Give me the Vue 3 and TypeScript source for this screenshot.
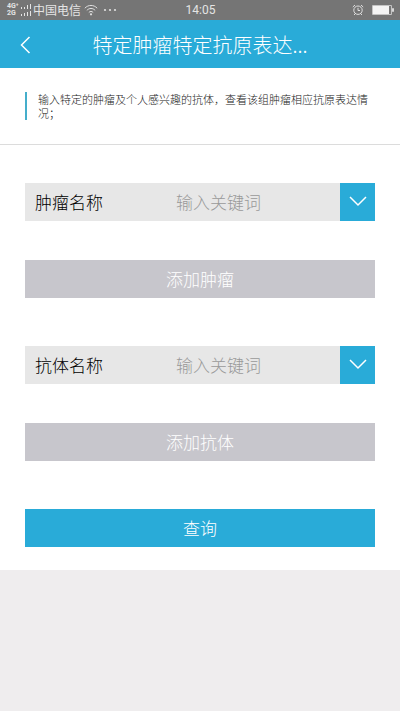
<script setup lang="ts">
import { reactive } from 'vue'

interface Field {
  id: string
  label: string
  add: string
  value: string
}

const fields = reactive<Field[]>([
  { id: 'tumor', label: '肿瘤名称', add: '添加肿瘤', value: '' },
  { id: 'antibody', label: '抗体名称', add: '添加抗体', value: '' },
])
</script>

<template>
  <div class="page">
    <div class="status">
      <div class="status-left">
        <span class="network"><span>4G⁺</span><span>2G</span></span>
        <svg class="signal" width="12" height="14" viewBox="0 0 12 14" aria-hidden="true">
          <path d="M1.500 4V6M4.500 4V6M7.500 2V6M10.500 1V6M1.500 11V13M4.500 10V13M7.500 9V13M10.500 8V13" />
        </svg>
        <span class="carrier">中国电信</span>
        <svg class="wifi" width="14" height="12" viewBox="0 0 14 12" aria-hidden="true">
          <path d="M.8 4.200C4.300.5 9.700.5 13.200 4.200M2.800 6.400C5.200 3.800 8.800 3.800 11.200 6.400M4.800 8.500C6.100 7.100 7.900 7.100 9.200 8.500" />
          <circle cx="7" cy="10.300" r="1.100" />
        </svg>
        <svg class="more" width="14" height="4" viewBox="0 0 14 4" aria-hidden="true">
          <circle cx="2" cy="2" r="1.100" /><circle cx="7" cy="2" r="1.100" /><circle cx="12" cy="2" r="1.100" />
        </svg>
      </div>
      <span class="time">14:05</span>
      <div class="status-right">
        <svg class="alarm" width="12" height="12" viewBox="0 0 12 12" aria-hidden="true">
          <circle cx="6" cy="6.200" r="4.200" />
          <path d="M6 3.800V6.500H8M.8 3L3 1M11.200 3L9 1M3.200 9.500L2.200 11M8.800 9.500L9.800 11" />
        </svg>
        <svg width="22" height="10" viewBox="0 0 22 10" aria-hidden="true">
          <rect x="0" y="0" width="20" height="10" rx="1" fill="#c4c4c4" />
          <rect x="1" y="1" width="16" height="8" fill="#f4f4f4" />
          <rect x="17" y="1" width="2" height="8" fill="#777" />
          <rect x="20" y="3" width="2" height="4" rx="1" fill="#d8d8d8" />
        </svg>
      </div>
    </div>

    <header class="header">
      <button class="back" type="button" aria-label="返回">
        <svg width="12" height="18" viewBox="0 0 12 18" aria-hidden="true">
          <path d="M10.500 1L2.500 9L10.500 17" />
        </svg>
      </button>
      <h1>特定肿瘤特定抗原表达...</h1>
    </header>

    <main class="content">
      <section class="intro">
        <p>输入特定的肿瘤及个人感兴趣的抗体，查看该组肿瘤相应抗原表达情况；</p>
      </section>

      <form class="form" @submit.prevent>
        <div v-for="field in fields" :key="field.id" class="group">
          <div class="field">
            <label :for="field.id">{{ field.label }}</label>
            <input :id="field.id" v-model="field.value" type="text" placeholder="输入关键词" />
            <button class="toggle" type="button" :aria-label="field.label">
              <svg width="18" height="12" viewBox="0 0 18 12" aria-hidden="true">
                <path d="M1 1L9 9L17 1" />
              </svg>
            </button>
          </div>
          <button class="action add" type="button">{{ field.add }}</button>
        </div>
        <button class="action query" type="submit">查询</button>
      </form>
    </main>
  </div>
</template>

<style>
body {
  margin: 0;
  background: #efedee;
}
</style>

<style scoped>
.page {
  font-family: "Noto Sans CJK SC", sans-serif;
  font-weight: 300;
}

button,
input {
  margin: 0;
  padding: 0;
  border: 0;
  border-radius: 0;
  font: inherit;
}

svg {
  display: block;
  fill: none;
}

.status {
  display: grid;
  grid-template-columns: 1fr auto 1fr;
  align-items: center;
  height: 20px;
  padding: 0 6px 0 7px;
  background: #757575;
  color: #e4e4e4;
  font-size: 12px;
  line-height: 20px;
}

.status-left,
.status-right {
  display: flex;
  align-items: center;
}

.status-right {
  justify-content: flex-end;
  gap: 8px;
}

.network {
  display: flex;
  flex-direction: column;
  width: 13px;
  font-family: Roboto, sans-serif;
  font-size: 7px;
  font-weight: 700;
  line-height: 7px;
}

.signal {
  stroke: #e4e4e4;
}

.carrier {
  margin-left: 1px;
  font-weight: 400;
}

.wifi {
  margin-left: 3px;
  stroke: #e0e0e0;
}

.wifi circle,
.more circle {
  fill: #e0e0e0;
  stroke: none;
}

.more {
  margin-left: 5px;
}

.time {
  font-family: Roboto, sans-serif;
  font-weight: 400;
}

.alarm {
  stroke: #e0e0e0;
}

.header {
  display: grid;
  grid-template-columns: 50px 1fr 50px;
  align-items: center;
  height: 48px;
  background: #29abd8;
  color: #fff;
}

.back {
  display: flex;
  align-items: center;
  justify-content: center;
  height: 48px;
  background: transparent;
}

.back svg,
.toggle svg {
  stroke: #fff;
  stroke-width: 1.500;
}

h1 {
  margin: 0;
  font-size: 20px;
  font-weight: 300;
  line-height: 50px;
  text-align: center;
  white-space: nowrap;
}

.content {
  background: #fff;
}

.intro {
  padding: 24px 25px 24px;
  border-bottom: 1px solid #dcdcdc;
}

.intro p {
  margin: 0;
  padding-left: 11px;
  border-left: 2px solid #45aecb;
  color: #222;
  font-size: 11px;
  font-weight: 300;
  line-height: 14px;
}

.form {
  padding: 38px 25px 23px;
}

.group {
  margin-bottom: 48px;
}

.field {
  display: flex;
  height: 38px;
  margin-bottom: 39px;
  background: #e7e7e7;
  font-size: 17px;
}

.field label {
  flex: 0 0 141px;
  padding-left: 10px;
  color: #000;
  line-height: 38px;
}

.field input {
  flex: 1;
  min-width: 0;
  padding-bottom: 2px;
  background: transparent;
  color: #333;
  outline: none;
}

.field input::placeholder {
  color: #999;
  opacity: 1;
}

.toggle {
  display: flex;
  flex: 0 0 35px;
  align-items: center;
  justify-content: center;
  background: #29abd8;
}

.action {
  display: block;
  width: 100%;
  height: 38px;
  color: #fff;
  font-size: 17px;
  line-height: 38px;
}

.add {
  background: #c7c6cc;
}

.query {
  background: #29abd8;
}
</style>
